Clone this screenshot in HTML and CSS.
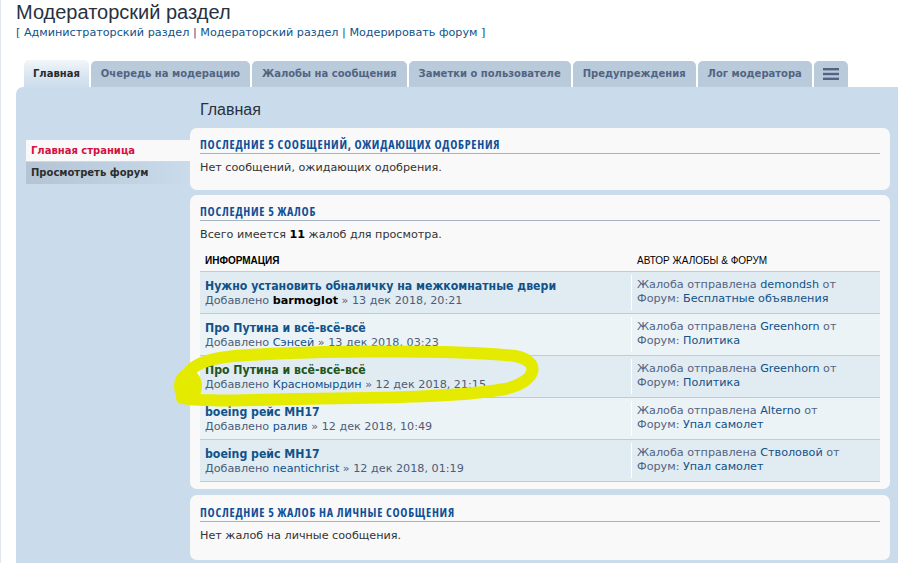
FILE: index.html
```html
<!DOCTYPE html>
<html lang="ru">
<head>
<meta charset="utf-8">
<title>Модераторский раздел</title>
<link rel="stylesheet" href="styles.css">
</head>
<body>
<div class="page">
  <h1 class="title">Модераторский раздел</h1>
  <p class="quicklinks">[ <a href="#">Администраторский раздел</a> | <a href="#">Модераторский раздел</a> | <a href="#">Модерировать форум</a> ]</p>

  <ul class="tabs">
    <li class="tab active">Главная</li>
    <li class="tab">Очередь на модерацию</li>
    <li class="tab">Жалобы на сообщения</li>
    <li class="tab">Заметки о пользователе</li>
    <li class="tab">Предупреждения</li>
    <li class="tab">Лог модератора</li>
    <li class="tab menu-tab">
      <svg width="16" height="12" viewBox="0 0 16 12"><rect x="0" y="0" width="16" height="2.4" fill="#536482"/><rect x="0" y="4.8" width="16" height="2.4" fill="#536482"/><rect x="0" y="9.6" width="16" height="2.4" fill="#536482"/></svg>
    </li>
  </ul>

  <div class="main">
    <ul class="sidemenu">
      <li class="side-item current">Главная страница</li>
      <li class="side-item">Просмотреть форум</li>
    </ul>

    <div class="content">
      <h2 class="heading">Главная</h2>

      <div class="panel">
        <h3 class="panel-title">Последние 5 сообщений, ожидающих одобрения</h3>
        <p class="panel-text">Нет сообщений, ожидающих одобрения.</p>
      </div>

      <div class="panel panel-reports">
        <h3 class="panel-title">Последние 5 жалоб</h3>
        <p class="panel-text">Всего имеется <strong>11</strong> жалоб для просмотра.</p>

        <div class="table">
          <div class="thead">
            <div class="th">Информация</div>
            <div class="th th-right">Автор жалобы &amp; Форум</div>
          </div>

          <div class="row bg2">
            <div class="cell">
              <a class="topic" href="#">Нужно установить обналичку на межкомнатные двери</a>
              <div class="meta">Добавлено <strong class="uname">barmoglot</strong> » 13 дек 2018, 20:21</div>
            </div>
            <div class="cell cell-right"><div class="inner">Жалоба отправлена <a href="#">demondsh</a> от<br>Форум: <a href="#">Бесплатные объявления</a></div></div>
          </div>

          <div class="row bg1">
            <div class="cell">
              <a class="topic" href="#">Про Путина и всё-всё-всё</a>
              <div class="meta">Добавлено <a href="#" class="ulink">Сэнсей</a> » 13 дек 2018, 03:23</div>
            </div>
            <div class="cell cell-right"><div class="inner">Жалоба отправлена <a href="#">Greenhorn</a> от<br>Форум: <a href="#">Политика</a></div></div>
          </div>

          <div class="row bg2">
            <div class="cell">
              <a class="topic marked" href="#">Про Путина и всё-всё-всё</a>
              <div class="meta">Добавлено <a href="#" class="ulink">Красномырдин</a> » 12 дек 2018, 21:15</div>
            </div>
            <div class="cell cell-right"><div class="inner">Жалоба отправлена <a href="#">Greenhorn</a> от<br>Форум: <a href="#">Политика</a></div></div>
          </div>

          <div class="row bg1">
            <div class="cell">
              <a class="topic" href="#">boeing рейс MH17</a>
              <div class="meta">Добавлено <a href="#" class="ulink">ралив</a> » 12 дек 2018, 10:49</div>
            </div>
            <div class="cell cell-right"><div class="inner">Жалоба отправлена <a href="#">Alterno</a> от<br>Форум: <a href="#">Упал самолет</a></div></div>
          </div>

          <div class="row bg2">
            <div class="cell">
              <a class="topic" href="#">boeing рейс MH17</a>
              <div class="meta">Добавлено <a href="#" class="ulink">neantichrist</a> » 12 дек 2018, 01:19</div>
            </div>
            <div class="cell cell-right"><div class="inner">Жалоба отправлена <a href="#">Стволовой</a> от<br>Форум: <a href="#">Упал самолет</a></div></div>
          </div>
        </div>
      </div>

      <div class="panel panel-last">
        <h3 class="panel-title">Последние 5 жалоб на личные сообщения</h3>
        <p class="panel-text">Нет жалоб на личные сообщения.</p>
      </div>
    </div>
  </div>
</div>

<svg class="scribble" width="898" height="563" viewBox="0 0 898 563">
  <path d="M 188 398 C 179 378, 186 360, 235 356 C 300 351, 450 349, 515 356 C 542 361, 537 382, 505 389 C 460 397, 380 398, 300 399 C 240 400, 200 402, 182 398" fill="none" stroke="#e4eb00" stroke-width="12" stroke-linecap="round" stroke-linejoin="round"/>
  <ellipse cx="188" cy="386" rx="14" ry="17" fill="#e4eb00"/>
</svg>
</body>
</html>
```

FILE: styles.css
```css
html, body {
  margin: 0;
  padding: 0;
  background: #ffffff;
}
body {
  font-family: "DejaVu Sans", Verdana, sans-serif;
  font-size: 11.2px;
  color: #333333;
  overflow: hidden;
  height: 563px;
  position: relative;
  border-left: 1px solid #e2e7ed;
}
a {
  color: #105289;
  text-decoration: none;
}
.page {
  padding-left: 15px;
}
.title {
  margin: 0;
  font-family: "Liberation Sans", Arial, sans-serif;
  font-weight: normal;
  font-size: 20px;
  line-height: 24px;
  color: #28313f;
}
.quicklinks {
  margin: 2px 0 0 0;
  line-height: 14px;
  color: #105289;
}
.tabs {
  list-style: none;
  margin: 20px 0 0 0;
  padding: 0 0 0 8px;
  display: flex;
  align-items: flex-end;
  gap: 2px;
  height: 27px;
  position: relative;
  z-index: 2;
}
.tab {
  font-weight: bold;
  font-size: 10px;
  color: #536482;
  background: #b9cbdb;
  border-radius: 5px 5px 0 0;
  padding: 0 10px;
  height: 26px;
  line-height: 26px;
  white-space: nowrap;
}
.tab.active {
  height: 28px;
  line-height: 28px;
  margin-bottom: -1px;
  color: #2b2b2b;
  background: linear-gradient(to bottom, #f2f6fa 0%, #dbe7f1 50%, #cadceb 100%);
  padding: 0 9px;
}
.menu-tab {
  display: flex;
  align-items: center;
  padding: 0 9px;
}
.main {
  background: #cadceb;
  border-radius: 7px 0 0 0;
  margin-right: -30px;
  padding: 0 38px 0 10px;
  display: flex;
  min-height: 520px;
}
.sidemenu {
  list-style: none;
  margin: 53px 0 0 0;
  padding: 0;
  width: 164px;
  flex: none;
}
.side-item {
  font-weight: bold;
  font-size: 10px;
  padding-left: 5px;
  height: 22px;
  line-height: 22px;
  color: #2d2d2d;
  background: linear-gradient(to right, #b4c4d4 0%, #bfd0e0 55%, #cadceb 100%);
}
.side-item.current {
  height: 21px;
  line-height: 21px;
  margin-bottom: 1px;
  color: #d31141;
  background: #f9f9f9;
}
.content {
  width: 700px;
  flex: none;
  padding-top: 13px;
}
.heading {
  margin: 0 0 8px 10px;
  font-family: "Liberation Sans", Arial, sans-serif;
  font-weight: normal;
  font-size: 16px;
  line-height: 20px;
  color: #28313f;
}
.panel {
  background: #f9f9f9;
  border-radius: 7px;
  padding: 10px 10px 14px 10px;
  margin-bottom: 5px;
}
.panel-reports {
  padding-bottom: 7px;
  margin-bottom: 6px;
}
.panel-last {
  padding-top: 11px;
  padding-bottom: 16px;
}
.panel-title {
  margin: 0;
  font-family: "Open Sans", "DejaVu Sans Condensed", sans-serif;
  font-stretch: 75%;
  font-weight: 700;
  font-size: 12px;
  letter-spacing: 0.75px;
  line-height: 14px;
  text-transform: uppercase;
  color: #115098;
  padding-bottom: 1px;
  border-bottom: 1px solid #a6b2c0;
}
.panel-text {
  margin: 6px 0 0 0;
  line-height: 16px;
  color: #333333;
}
.panel-text strong {
  color: #000;
}
.table {
  margin-top: 11px;
}
.thead {
  display: grid;
  grid-template-columns: 431px 1fr;
  border-bottom: 1px solid #c2cbd4;
  padding-bottom: 3px;
}
.th {
  font-family: "Liberation Sans", Arial, sans-serif;
  font-size: 10px;
  line-height: 14px;
  text-transform: uppercase;
  color: #000;
  font-weight: bold;
  padding-left: 5px;
}
.th-right {
  font-weight: normal;
  padding-left: 6px;
}
.row {
  display: grid;
  grid-template-columns: 431px 1fr;
  border-bottom: 1px solid #c2cbd4;
}
.row.bg2 {
  background: #e1ebf2;
}
.row.bg1 {
  background: #ecf3f7;
}
.cell {
  padding: 6px 0 5px 5px;
}
.cell-right {
  padding: 3px 0 3px 0;
}
.cell-right .inner {
  border-left: 1px solid #ffffff;
  padding: 3px 0 0 5px;
  height: 32px;
  line-height: 14px;
  color: #536482;
}
.topic {
  display: block;
  font-family: "DejaVu Sans Condensed", "DejaVu Sans", sans-serif;
  font-weight: bold;
  font-size: 12.2px;
  line-height: 16px;
  color: #105289;
}
.topic.marked {
  color: #21541a;
}
.meta {
  line-height: 14px;
  color: #4c5d77;
}
.meta .ulink {
  color: #105289;
}
.uname {
  color: #000000;
}
.scribble {
  position: absolute;
  left: -1px;
  top: 0;
  pointer-events: none;
  z-index: 5;
}
```
